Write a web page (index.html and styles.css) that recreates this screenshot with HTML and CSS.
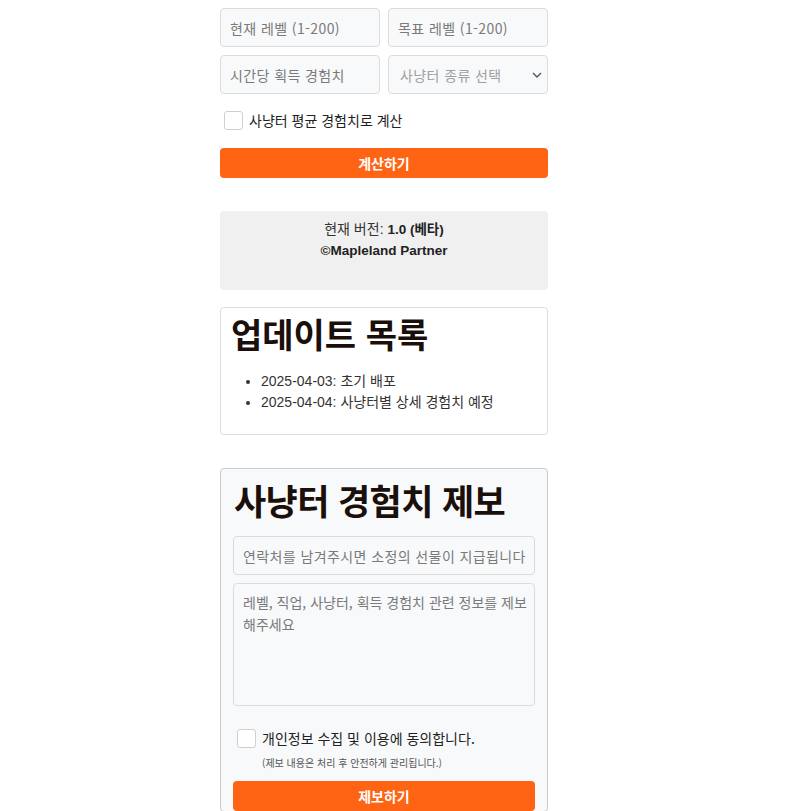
FILE: index.html
```html
<!DOCTYPE html>
<html lang="ko">
<head>
<meta charset="utf-8">
<title>Mapleland Partner</title>
<link rel="stylesheet" href="styles.css">
</head>
<body>
<div class="wrap">
  <div class="grid">
    <input class="field" type="text" placeholder="현재 레벨 (1-200)">
    <input class="field" type="text" placeholder="목표 레벨 (1-200)">
    <input class="field" type="text" placeholder="시간당 획득 경험치">
    <div class="select-box">
      <select class="field select"><option>사냥터 종류 선택</option></select>
      <svg class="chev" width="10" height="6" viewBox="0 0 10 6"><path d="M1 1l4 4 4-4" fill="none" stroke="#555" stroke-width="1.4"/></svg>
    </div>
  </div>
  <label class="check-row">
    <span class="box"></span>
    <span>사냥터 평균 경험치로 계산</span>
  </label>
  <button class="btn">계산하기</button>

  <div class="version">
    <div class="vline">현재 버전: <b>1.0 (베타)</b></div>
    <div class="vline"><b>©Mapleland Partner</b></div>
  </div>

  <div class="updates">
    <h2 class="h-upd">업데이트 목록</h2>
    <ul class="list">
      <li>2025-04-03: 초기 배포</li>
      <li>2025-04-04: 사냥터별 상세 경험치 예정</li>
    </ul>
  </div>

  <div class="report">
    <h2 class="h-rep">사냥터 경험치 제보</h2>
    <input class="field full" type="text" placeholder="연락처를 남겨주시면 소정의 선물이 지급됩니다">
    <textarea class="field area" placeholder="레벨, 직업, 사냥터, 획득 경험치 관련 정보를 제보해주세요"></textarea>
    <label class="check-row agree">
      <span class="box"></span>
      <span>개인정보 수집 및 이용에 동의합니다.</span>
    </label>
    <div class="note">(제보 내용은 처리 후 안전하게 관리됩니다.)</div>
    <button class="btn">제보하기</button>
  </div>
</div>
</body>
</html>
```
FILE: styles.css
```css
* { box-sizing: border-box; }
html, body { margin: 0; }
body {
  padding: 8px 0 0;
  background: #fff;
  font-family: "Liberation Sans", "Noto Sans CJK KR", sans-serif;
  font-size: 14px;
  color: #333;
  overflow: hidden;
}
.wrap {
  width: 328px;
  margin-left: 220px;
}
.grid {
  display: grid;
  grid-template-columns: 1fr 1fr;
  gap: 8px;
}
.field {
  display: block;
  width: 100%;
  height: 39px;
  border: 1px solid #dcdcdc;
  border-radius: 4px;
  background: #f8f9fa;
  padding: 0 6px 0 9px;
  font-family: "Noto Sans CJK KR", "Liberation Sans", sans-serif;
  font-size: 14px;
  letter-spacing: 0.4px;
  color: #333;
  outline: none;
}
.field::placeholder { color: #7a7a7a; }
.select-box { position: relative; }
.select {
  appearance: none;
  -webkit-appearance: none;
  color: #a0a0a0;
  padding-left: 11px;
}
.chev { position: absolute; right: 6px; top: 17px; }
.check-row {
  display: flex;
  align-items: center;
  gap: 6px;
  margin: 16px 0 0 4px;
  font-family: "Noto Sans CJK KR", sans-serif;
  font-size: 14px;
  color: #222;
  height: 20px;
}
.box {
  width: 19px;
  height: 19px;
  border: 1px solid #cfcfcf;
  border-radius: 3px;
  background: #fff;
}
.btn {
  display: block;
  width: 100%;
  height: 30px;
  margin-top: 18px;
  border: 0;
  border-radius: 4px;
  background: #ff6314;
  color: #fff;
  font-family: "Noto Sans CJK KR", sans-serif;
  font-weight: 700;
  font-size: 14px;
}
.version {
  margin-top: 33px;
  background: #f0f0f0;
  border-radius: 4px;
  padding: 8px 0 0;
  text-align: center;
  color: #333;
  height: 79px;
}
.vline { height: 21px; line-height: 21px; }
.version b { color: #222; font-size: 13.5px; }
.updates {
  margin-top: 17px;
  border: 1px solid #dddddd;
  border-radius: 4px;
  padding: 6px 10px 10px;
  height: 128px;
}
.h-upd {
  margin: 0;
  font-family: "Noto Sans CJK KR", sans-serif;
  font-size: 34px;
  font-weight: 700;
  line-height: 40px;
  color: #1a0f0a;
  letter-spacing: 0;
}
.list {
  margin: 17px 0 0;
  padding-left: 30px;
  color: #333;
}
.list li { height: 21px; line-height: 21px; }
.report {
  margin-top: 33px;
  border: 1px solid #cccccc;
  border-radius: 4px;
  background: #f8f9fa;
  padding: 8px 12px 0;
}
.h-rep {
  margin: 0 0 0 1px;
  font-family: "Noto Sans CJK KR", sans-serif;
  font-size: 35px;
  font-weight: 700;
  line-height: 46px;
  color: #1a0f0a;
  letter-spacing: -0.6px;
}
.full { margin-top: 13px; }
.area {
  margin-top: 8px;
  height: 123px;
  padding: 7px 4px 7px 9px;
  line-height: 22px;
  letter-spacing: 0;
  resize: none;
}
.agree { margin: 22px 0 0 4px; }
.note {
  margin: 8px 0 0 29px;
  font-family: "Noto Sans CJK KR", sans-serif;
  font-size: 10px;
  line-height: 14px;
  color: #555;
}
.report .btn { margin-top: 11px; }
```
